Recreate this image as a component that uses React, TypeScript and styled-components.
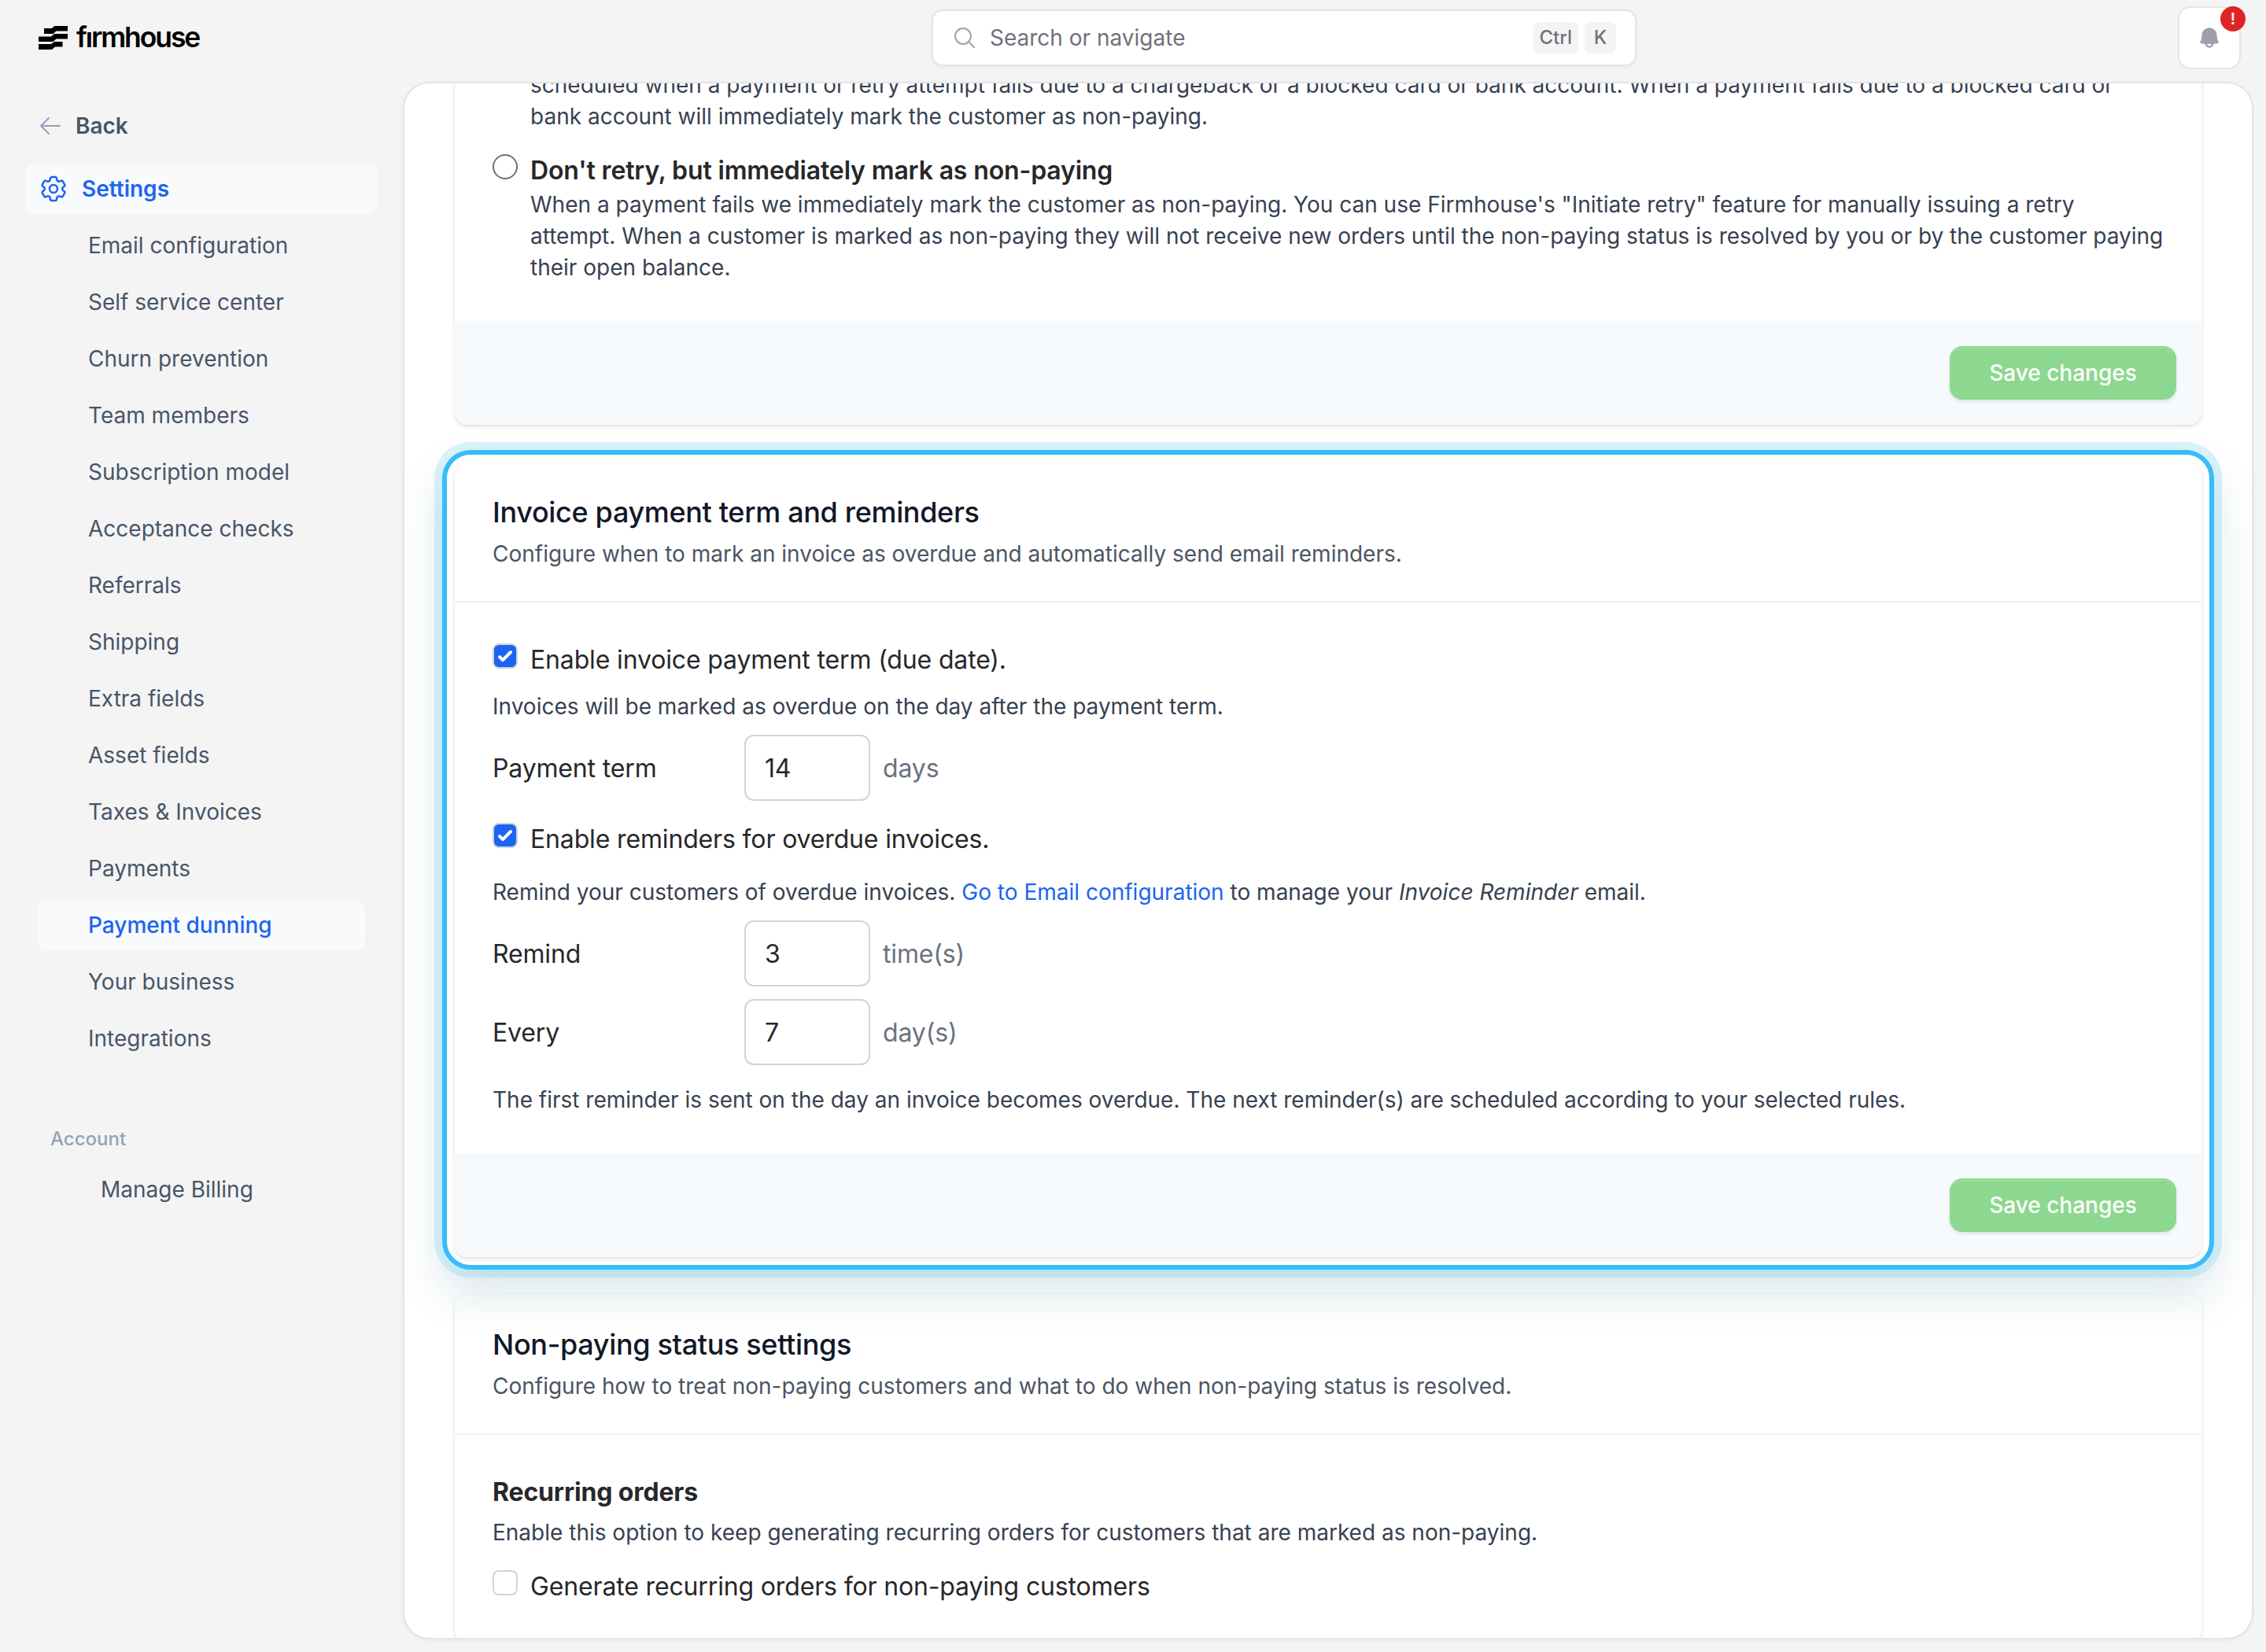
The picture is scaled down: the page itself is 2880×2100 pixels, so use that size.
import React from "react";
import styled, { createGlobalStyle, css } from "styled-components";
import {
  HiOutlineArrowLeft,
  HiOutlineCog6Tooth,
  HiOutlineMagnifyingGlass,
  HiMiniBell,
} from "react-icons/hi2";

const GlobalStyle = createGlobalStyle`
  *, *::before, *::after { box-sizing: border-box; }
  body { margin: 0; background: #f4f4f4; }
`;

const Page = styled.div`
  position: relative;
  display: flex;
  flex-direction: column;
  width: 2880px;
  height: 2100px;
  overflow: hidden;
  background: #f4f4f4;
  color: #27272a;
  font-family: Inter, "Liberation Sans", sans-serif;
  font-size: 32px;
  line-height: 48px;
`;

const TopBar = styled.header`
  display: flex;
  flex: none;
  height: 106px;
  padding: 8px 32px 0 49px;
`;

const Brand = styled.div`
  display: flex;
  flex: none;
  align-items: center;
  gap: 11px;
  width: 1135px;
  height: 80px;
`;

const BrandName = styled.span`
  color: #000;
  font-size: 35.5px;
  font-weight: 620;
  letter-spacing: -2.1px;
  line-height: 40px;
`;

const DotlessStem = styled.span`
  display: inline-block;
  clip-path: inset(13px -2px 0 -2px);
`;

const SearchBox = styled.div`
  display: flex;
  flex: none;
  align-items: center;
  width: 896px;
  height: 72px;
  margin-top: 4px;
  padding: 0 24px;
  border: 2px solid #e4e4e7;
  border-radius: 14px;
  background: #fff;
  box-shadow: 0 2px 4px rgba(0, 0, 0, 0.05);
  color: #71717a;
  font-size: 28px;

  svg { color: #9f9fa9; font-size: 32px; margin-right: 16px; }
`;

const SearchHint = styled.span`
  flex: 1;
`;

const Key = styled.kbd`
  min-width: 40px;
  height: 40px;
  margin-left: 8px;
  padding: 0 8px;
  border-radius: 8px;
  background: #f4f4f5;
  color: #71717a;
  font-family: inherit;
  font-size: 24px;
  font-weight: 500;
  line-height: 40px;
  text-align: center;
`;

const BellButton = styled.button`
  position: relative;
  display: flex;
  align-items: center;
  justify-content: center;
  width: 80px;
  height: 80px;
  margin-left: auto;
  padding: 0;
  border: 2px solid #e4e4e7;
  border-radius: 16px;
  background: #fff;
  color: #9f9fa9;
  font-size: 32px;
`;

const AlertBadge = styled.span`
  position: absolute;
  top: -2px;
  right: -8px;
  width: 32px;
  height: 32px;
  border-radius: 50%;
  background: #e02424;
  color: #fff;
  font-family: Inter, sans-serif;
  font-size: 20px;
  font-weight: 600;
  line-height: 32px;
  text-align: center;
`;

const Columns = styled.div`
  display: flex;
  flex: none;
  height: 1976px;
`;

const Sidebar = styled.nav`
  flex: none;
  width: 514px;
  padding: 22px 34px 0 32px;
  color: #475569;
  font-size: 28px;
`;

const BackLink = styled.a`
  display: flex;
  align-items: center;
  gap: 16px;
  height: 64px;
  margin-bottom: 16px;
  padding-left: 16px;
  font-weight: 600;

  svg { color: #90a1b9; font-size: 32px; }
`;

const SectionLink = styled.a`
  display: flex;
  align-items: center;
  gap: 16px;
  height: 64px;
  margin-bottom: 8px;
  padding-left: 16px;
  border-radius: 12px;
  background: #f8fafc;
  color: #1c64f2;
  font-weight: 600;

  svg { font-size: 40px; }
`;

const SubList = styled.div`
  display: flex;
  flex-direction: column;
  gap: 8px;
  padding: 0 16px;
`;

const SubLink = styled.a<{ $active?: boolean }>`
  height: 64px;
  padding-left: 64px;
  border-radius: 12px;
  line-height: 64px;
  ${(p) => p.$active && css`
    background: #f8fafc;
    color: #1c64f2;
    font-weight: 500;
  `}
`;

const AccountHeading = styled.div`
  margin-top: 72px;
  padding-left: 32px;
  color: #94a3b8;
  font-size: 24px;
  font-weight: 500;
  line-height: 48px;
`;

const AccountLink = styled.a`
  display: block;
  margin-top: 8px;
  padding-left: 96px;
  line-height: 64px;
`;

const MainFrame = styled.div`
  display: flex;
  flex: none;
  width: 2348px;
  height: 1976px;
  border-radius: 32px;
  box-shadow: 0 0 0 2px #e4e4e7, 0 2px 6px rgba(0, 0, 0, 0.08);
`;

const Main = styled.main`
  width: 2348px;
  padding: 0 64px;
  overflow: hidden;
  border-radius: 32px;
  background: #fff;
`;

const CardStack = styled.div`
  display: flex;
  flex-direction: column;
  gap: 48px;
  margin-top: -66px;
`;

const Card = styled.section`
  overflow: hidden;
  border-radius: 16px;
  background: #fff;
  box-shadow: 0 2px 6px rgba(0, 0, 0, 0.1), 0 2px 4px -2px rgba(0, 0, 0, 0.1);
`;

const CardHeader = styled.header`
  padding: 40px 48px;
  border-bottom: 2px solid #edf2f7;
`;

const CardTitle = styled.h2`
  margin: -1px 0 9px;
  color: #111827;
  font-size: 36px;
  font-weight: 500;
  letter-spacing: -0.33px;
  line-height: 48px;
`;

const CardSubtitle = styled.p`
  margin: 0;
  color: #4b5563;
  font-size: 28px;
  line-height: 40px;
`;

const CardBody = styled.div`
  padding: 48px;
`;

const CardFooter = styled.footer`
  display: flex;
  justify-content: flex-end;
  padding: 32px;
  background: #f7fafc;
`;

const SaveButton = styled.button`
  width: 288px;
  height: 68px;
  padding: 0;
  border: 2px solid #8dd890;
  border-radius: 16px;
  background: #8dd890;
  box-shadow: 0 2px 4px rgba(0, 0, 0, 0.12), inset 0 1px rgba(255, 255, 255, 0.25);
  color: #fff;
  font-family: inherit;
  font-size: 28px;
  font-weight: 500;
`;

const Text = styled.p<{ $top?: number; $indent?: boolean }>`
  margin: ${(p) => p.$top ?? 0}px 0 0;
  padding-left: ${(p) => (p.$indent ? 48 : 0)}px;
  color: #374151;
  font-size: 28px;
  line-height: 40px;

  a { color: #1c64f2; }
`;

const Choice = styled.div<{ $top?: number }>`
  display: flex;
  gap: 16px;
  margin-top: ${(p) => p.$top ?? 0}px;
`;

const ChoiceLabel = styled.div<{ $weight?: number }>`
  padding-top: 1px;
  font-weight: ${(p) => p.$weight ?? 400};
  letter-spacing: -0.15px;
  line-height: 47px;
`;

const Radio = styled.span`
  flex: none;
  width: 32px;
  height: 32px;
  margin-top: 4px;
  border: 2px solid #6b7280;
  border-radius: 50%;
`;

const Box = styled.span<{ $checked?: boolean }>`
  display: flex;
  flex: none;
  align-items: center;
  justify-content: center;
  width: 32px;
  height: 32px;
  margin-top: 4px;
  border: 2px solid #cbd5e1;
  border-radius: 8px;
  background: ${(p) => (p.$checked ? "#1c64f2" : "#fff")};

  svg { flex: none; }
`;

const Field = styled.div`
  display: grid;
  grid-template-columns: 320px 160px auto;
  align-items: center;
  margin-top: 16px;
  letter-spacing: -0.15px;
`;

const FieldLabel = styled.span`
  padding-top: 1px;
  line-height: 47px;
`;

const NumberValue = styled.div`
  height: 84px;
  padding: 1px 24px 0;
  border: 2px solid #cbd5e1;
  border-radius: 12px;
  background: #fff;
  line-height: 79px;
`;

const Unit = styled(FieldLabel)`
  padding-left: 16px;
  color: #6b7280;
`;

const Highlight = styled.div`
  position: absolute;
  top: 572px;
  left: 562px;
  width: 2252px;
  height: 1042px;
  border: 6px solid #38bdf8;
  border-radius: 36px;
  box-shadow: 0 0 0 10px rgba(56, 189, 248, 0.18), 0 30px 60px rgba(10, 92, 112, 0.16);
  pointer-events: none;
`;

const LogoMark = () => (
  <svg width="37" height="30" viewBox="0 0 37 30">
    <path d="M7 3h9.500l4-3H37v6.500H22.500l-4 3.500H7zM0 13.500h16l4-3.500h17v6.500H22.500l-4 3.500H0zM0 23h16l4-3h10.500v6.500H21L17 30H0z" />
  </svg>
);

const Checkbox = ({ checked }: { checked?: boolean }) => (
  <Box $checked={checked}>
    {checked && (
      <svg width="32" height="32" viewBox="0 0 16 16" fill="#fff">
        <path d="M12.207 4.793a1 1 0 0 1 0 1.414l-5 5a1 1 0 0 1-1.414 0l-2-2a1 1 0 0 1 1.414-1.414L6.500 9.086l4.293-4.293a1 1 0 0 1 1.414 0z" />
      </svg>
    )}
  </Box>
);

const LINKS = [
  "Email configuration",
  "Self service center",
  "Churn prevention",
  "Team members",
  "Subscription model",
  "Acceptance checks",
  "Referrals",
  "Shipping",
  "Extra fields",
  "Asset fields",
  "Taxes & Invoices",
  "Payments",
  "Payment dunning",
  "Your business",
  "Integrations",
];

export default function App() {
  return (
    <Page>
      <GlobalStyle />
      <TopBar>
        <Brand>
          <LogoMark />
          <BrandName>
            f<DotlessStem>i</DotlessStem>rmhouse
          </BrandName>
        </Brand>
        <SearchBox>
          <HiOutlineMagnifyingGlass />
          <SearchHint>Search or navigate</SearchHint>
          <Key>Ctrl</Key>
          <Key>K</Key>
        </SearchBox>
        <BellButton>
          <HiMiniBell />
          <AlertBadge>!</AlertBadge>
        </BellButton>
      </TopBar>

      <Columns>
        <Sidebar>
          <BackLink>
            <HiOutlineArrowLeft />
            Back
          </BackLink>
          <SectionLink>
            <HiOutlineCog6Tooth />
            Settings
          </SectionLink>
          <SubList>
            {LINKS.map((label) => (
              <SubLink key={label} $active={label === "Payment dunning"}>
                {label}
              </SubLink>
            ))}
          </SubList>
          <AccountHeading>Account</AccountHeading>
          <AccountLink>Manage Billing</AccountLink>
        </Sidebar>

        <MainFrame>
          <Main>
            <CardStack>
              <Card>
                <CardBody>
                  <Text $indent>
                    scheduled when a payment or retry attempt fails due to a chargeback or a blocked card or
                    bank account. When a payment fails due to a blocked card or bank account will immediately
                    mark the customer as non-paying.
                  </Text>
                  <Choice $top={24}>
                    <Radio />
                    <div>
                      <ChoiceLabel $weight={600}>Don't retry, but immediately mark as non-paying</ChoiceLabel>
                      <Text>
                        When a payment fails we immediately mark the customer as non-paying. You can use
                        Firmhouse's "Initiate retry" feature for manually issuing a retry attempt. When a
                        customer is marked as non-paying they will not receive new orders until the non-paying
                        status is resolved by you or by the customer paying their open balance.
                      </Text>
                    </div>
                  </Choice>
                </CardBody>
                <CardFooter>
                  <SaveButton>Save changes</SaveButton>
                </CardFooter>
              </Card>

              <Card>
                <CardHeader>
                  <CardTitle>Invoice payment term and reminders</CardTitle>
                  <CardSubtitle>
                    Configure when to mark an invoice as overdue and automatically send email reminders.
                  </CardSubtitle>
                </CardHeader>
                <CardBody>
                  <Choice>
                    <Checkbox checked />
                    <ChoiceLabel>Enable invoice payment term (due date).</ChoiceLabel>
                  </Choice>
                  <Text $top={16}>Invoices will be marked as overdue on the day after the payment term.</Text>
                  <Field>
                    <FieldLabel>Payment term</FieldLabel>
                    <NumberValue>14</NumberValue>
                    <Unit>days</Unit>
                  </Field>
                  <Choice $top={24}>
                    <Checkbox checked />
                    <ChoiceLabel>Enable reminders for overdue invoices.</ChoiceLabel>
                  </Choice>
                  <Text $top={24}>
                    Remind your customers of overdue invoices. <a>Go to Email configuration</a> to manage your{" "}
                    <em>Invoice Reminder</em> email.
                  </Text>
                  <Field>
                    <FieldLabel>Remind</FieldLabel>
                    <NumberValue>3</NumberValue>
                    <Unit>time(s)</Unit>
                  </Field>
                  <Field>
                    <FieldLabel>Every</FieldLabel>
                    <NumberValue>7</NumberValue>
                    <Unit>day(s)</Unit>
                  </Field>
                  <Text $top={24}>
                    The first reminder is sent on the day an invoice becomes overdue. The next reminder(s) are
                    scheduled according to your selected rules.
                  </Text>
                </CardBody>
                <CardFooter>
                  <SaveButton>Save changes</SaveButton>
                </CardFooter>
              </Card>

              <Card>
                <CardHeader>
                  <CardTitle>Non-paying status settings</CardTitle>
                  <CardSubtitle>
                    Configure how to treat non-paying customers and what to do when non-paying status is
                    resolved.
                  </CardSubtitle>
                </CardHeader>
                <CardBody>
                  <ChoiceLabel $weight={700}>Recurring orders</ChoiceLabel>
                  <Text $top={8}>
                    Enable this option to keep generating recurring orders for customers that are marked as
                    non-paying.
                  </Text>
                  <Choice $top={24}>
                    <Checkbox />
                    <ChoiceLabel>Generate recurring orders for non-paying customers</ChoiceLabel>
                  </Choice>
                </CardBody>
              </Card>
            </CardStack>
          </Main>
        </MainFrame>
      </Columns>
      <Highlight />
    </Page>
  );
}
